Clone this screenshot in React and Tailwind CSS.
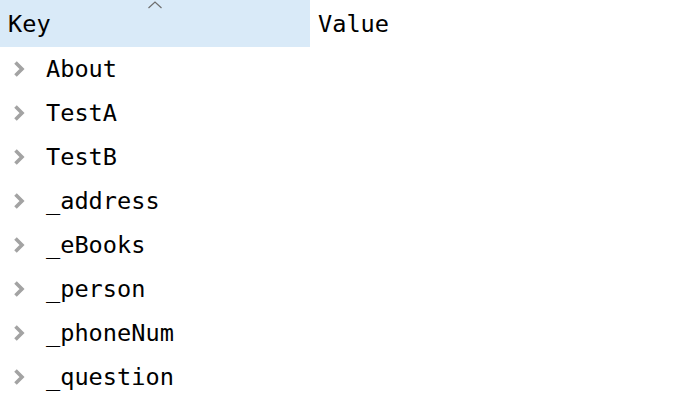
const rows = ["About", "TestA", "TestB", "_address", "_eBooks", "_person", "_phoneNum", "_question"];

function Chevron() {
    return (
        <svg width="12" height="16" viewBox="0 0 12 16" className="shrink-0">
            <path d="M2.5 1.5 L9 8 L2.5 14.5" fill="none" stroke="#a3a3a3" strokeWidth="3.6" />
        </svg>
    );
}

export default function App() {
    return (
        <div className="w-[678px] h-[416px] bg-white overflow-hidden text-[23.6px] text-black" style={{ fontFamily: '"DejaVu Sans Mono", monospace' }}>
            <div className="flex h-[47px]">
                <div className="relative w-[310px] bg-[#d9eaf8] flex items-center pl-2 pt-[2px]">
                    <svg width="16" height="8" viewBox="0 0 16 8" className="absolute left-[147px] top-[1px]">
                        <path d="M1.5 7 L8 1 L14.5 7" fill="none" stroke="#6e6e6e" strokeWidth="1.2" />
                    </svg>
                    <span>Key</span>
                </div>
                <div className="flex items-center pl-2 pt-[2px]">Value</div>
            </div>
            {rows.map(r => (
                <div key={r} className="flex items-center h-[44px] pl-[13px]">
                    <Chevron />
                    <span className="ml-[21px] pt-[2px]">{r}</span>
                </div>
            ))}
        </div>
    );
}
